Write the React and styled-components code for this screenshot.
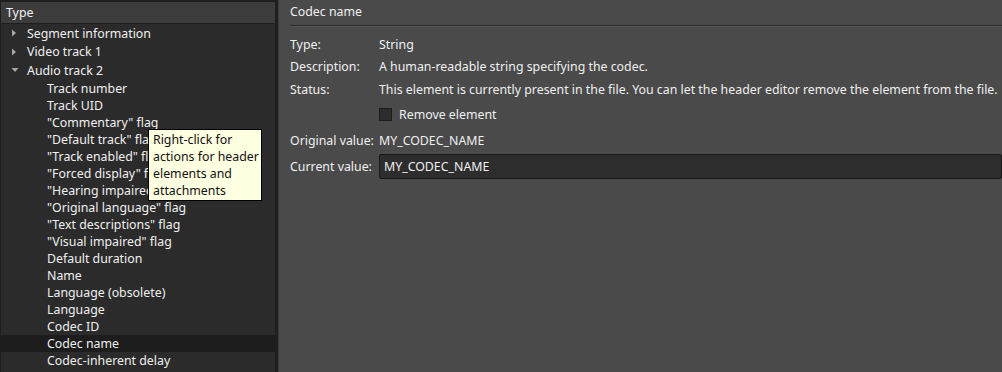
import React from 'react'
import styled, { createGlobalStyle } from 'styled-components'

const GlobalStyle = createGlobalStyle`
  html, body {
    margin: 0;
    padding: 0;
    background: #4a4a4a;
    overflow: hidden;
  }
  body {
    font-family: 'Noto Sans', 'Open Sans', sans-serif;
    font-size: 12.35px;
    color: #efefef;
  }
`

const Window = styled.div`
  display: flex;
  width: 1002px;
  height: 372px;
  overflow: hidden;
`

const TreePanel = styled.div`
  position: relative;
  width: 275px;
  flex-shrink: 0;
  display: flex;
  flex-direction: column;
  background: #2b2b2b;
  border-top: 2px solid #1e1e1e;
  border-left: 1px solid #1e1e1e;
  box-sizing: border-box;
`

const Splitter = styled.div`
  width: 3px;
  flex-shrink: 0;
  background: #1f1f1f;
  border-right: 1px solid #3a3a3a;
`

const HeaderCell = styled.div`
  height: 21px;
  line-height: 21px;
  padding-left: 5px;
  background: #3c3c3c;
  border-bottom: 1px solid #1e1e1e;
  color: #f2f2f2;
`

const TreeList = styled.ul`
  list-style: none;
  margin: 0;
  padding: 0;
`

const TreeRow = styled.li`
  display: flex;
  align-items: center;
  height: ${p => (p.$depth === 0 ? 18.5 : 17)}px;
  padding-left: ${p => (p.$depth === 0 ? 8 : 46)}px;
  background: ${p => (p.$selected ? '#1d1d1d' : 'transparent')};
  white-space: nowrap;
`

const Arrow = styled.span`
  width: 18px;
  display: inline-flex;
  align-items: center;
  justify-content: flex-start;
  padding-left: 2px;
  box-sizing: border-box;
  svg { display: block; }
`

// hover hint floating over the tree
const Tooltip = styled.div`
  position: absolute;
  left: 147px;
  top: 127px;
  width: 106px;
  padding: 1px 2px 1px 4px;
  background: #ffffe1;
  border: 1px solid #000;
  color: #111;
  line-height: 17px;
  z-index: 2;
`

const Details = styled.div`
  flex: 1;
  padding-left: 11px;
  background: #4a4a4a;
  min-width: 0;
`

const Title = styled.div`
  height: 25px;
  line-height: 23px;
  border-bottom: 1px solid #2c2c2c;
  box-shadow: 0 1px 0 #555;
`

const Form = styled.div`
  display: grid;
  grid-template-columns: 89px 1fr;
  margin-top: 7px;
  white-space: nowrap;
`

const Label = styled.div`
  display: flex;
  align-items: center;
  height: ${p => p.$h}px;
`

const Value = styled.div`
  display: flex;
  align-items: center;
  height: ${p => p.$h}px;
  min-width: 0;
`

const CheckBox = styled.span`
  width: 11px;
  height: 11px;
  margin-right: 7px;
  background: #2c2c2c;
  border: 1px solid #1c1c1c;
`

const Input = styled.div`
  width: 640px;
  height: 25px;
  line-height: 23px;
  padding-left: 4px;
  background: #2d2d2d;
  border: 1px solid #181818;
  border-radius: 2px;
  box-sizing: border-box;
`

const Closed = () => (
  <svg width="6" height="8" viewBox="0 0 6 8">
    <path d="M1 0.5 L5 4 L1 7.5 Z" fill="#a8a8a8" />
  </svg>
)

const Open = () => (
  <svg width="8" height="6" viewBox="0 0 8 6">
    <path d="M0.5 1 L7.5 1 L4 5 Z" fill="#a8a8a8" />
  </svg>
)

const children = [
  'Track number',
  'Track UID',
  '"Commentary" flag',
  '"Default track" flag',
  '"Track enabled" flag',
  '"Forced display" flag',
  '"Hearing impaired" flag',
  '"Original language" flag',
  '"Text descriptions" flag',
  '"Visual impaired" flag',
  'Default duration',
  'Name',
  'Language (obsolete)',
  'Language',
  'Codec ID',
  'Codec name',
  'Codec-inherent delay',
]

const fields = [
  { label: 'Type:', value: 'String', h: 22 },
  { label: 'Description:', value: 'A human-readable string specifying the codec.', h: 23 },
  {
    label: 'Status:',
    value:
      'This element is currently present in the file. You can let the header editor remove the element from the file.',
    h: 22,
  },
]

export default function App() {
  return (
    <Window>
      <GlobalStyle />
      <TreePanel>
        <HeaderCell>Type</HeaderCell>
        <TreeList>
          <TreeRow $depth={0}>
            <Arrow><Closed /></Arrow>Segment information
          </TreeRow>
          <TreeRow $depth={0}>
            <Arrow><Closed /></Arrow>Video track 1
          </TreeRow>
          <TreeRow $depth={0}>
            <Arrow><Open /></Arrow>Audio track 2
          </TreeRow>
          {children.map(c => (
            <TreeRow key={c} $depth={1} $selected={c === 'Codec name'}>
              {c}
            </TreeRow>
          ))}
        </TreeList>
        <Tooltip>
          Right-click for actions for header elements and attachments
        </Tooltip>
      </TreePanel>
      <Splitter />
      <Details>
        <Title>Codec name</Title>
        <Form>
          {fields.map(f => (
            <React.Fragment key={f.label}>
              <Label $h={f.h}>{f.label}</Label>
              <Value $h={f.h}>{f.value}</Value>
            </React.Fragment>
          ))}
          <Label $h={29} />
          <Value $h={29}>
            <CheckBox />
            Remove element
          </Value>
          <Label $h={23}>Original value:</Label>
          <Value $h={23}>MY_CODEC_NAME</Value>
          <Label $h={28}>Current value:</Label>
          <Value $h={28}>
            <Input>MY_CODEC_NAME</Input>
          </Value>
        </Form>
      </Details>
    </Window>
  )
}
